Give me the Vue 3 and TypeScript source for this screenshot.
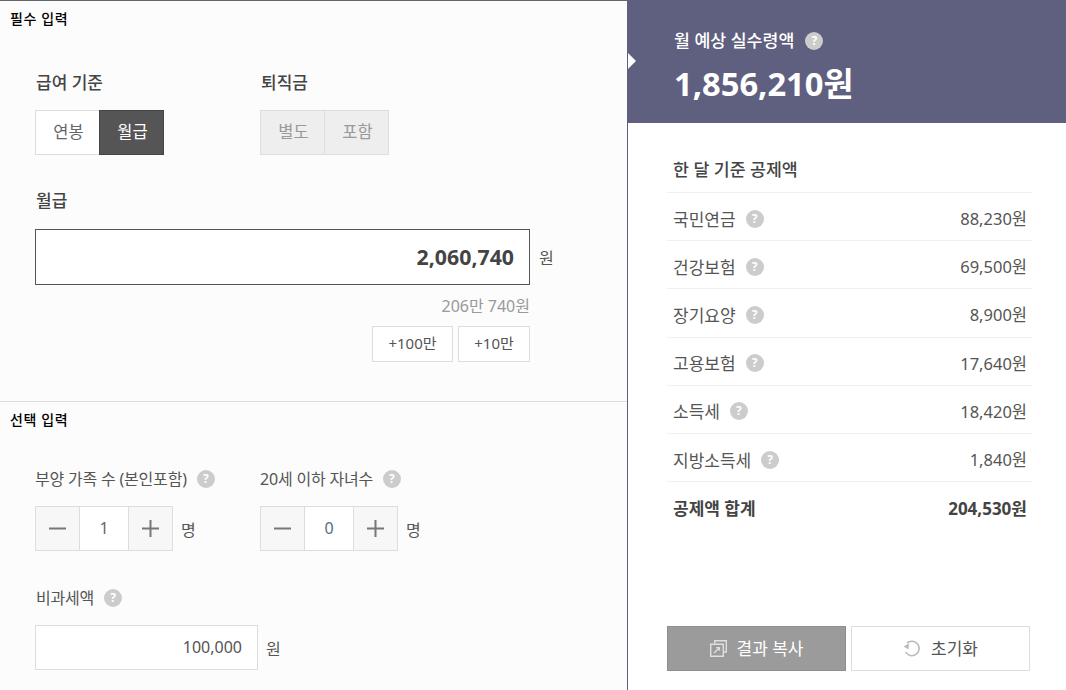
<script setup lang="ts">
interface Deduction {
  name: string
  amount: string
}

const deductions: Deduction[] = [
  { name: '국민연금', amount: '88,230원' },
  { name: '건강보험', amount: '69,500원' },
  { name: '장기요양', amount: '8,900원' },
  { name: '고용보험', amount: '17,640원' },
  { name: '소득세', amount: '18,420원' },
  { name: '지방소득세', amount: '1,840원' },
]

const steppers = [
  { label: '부양 가족 수 (본인포함)', value: 1 },
  { label: '20세 이하 자녀수', value: 0 },
]
</script>

<template>
  <div class="page">
    <div class="left">
      <section class="required">
        <h2 class="section-title">필수 입력</h2>
        <div class="choice-row">
          <div class="choice">
            <div class="label strong">급여 기준</div>
            <div class="toggle">
              <button class="toggle-btn">연봉</button>
              <button class="toggle-btn on">월급</button>
            </div>
          </div>
          <div class="choice">
            <div class="label strong">퇴직금</div>
            <div class="toggle off">
              <button class="toggle-btn">별도</button>
              <button class="toggle-btn">포함</button>
            </div>
          </div>
        </div>

        <div class="label strong salary-label">월급</div>
        <div class="salary-row">
          <div class="salary-input">2,060,740</div>
          <span class="unit">원</span>
        </div>
        <div class="salary-hint">206만 740원</div>
        <div class="quick">
          <button class="quick-btn wide">+100만</button>
          <button class="quick-btn">+10만</button>
        </div>
      </section>

      <section class="optional">
        <h2 class="section-title">선택 입력</h2>
        <div class="stepper-row">
          <div v-for="s in steppers" :key="s.label" class="choice">
            <div class="label">{{ s.label }}<span class="help">?</span></div>
            <div class="stepper-line">
              <div class="stepper">
                <button class="step-btn">
                  <svg width="17" height="17" viewBox="0 0 17 17"><path d="M0 8.5h17" stroke="#777" stroke-width="2" /></svg>
                </button>
                <div class="step-value" :class="{ zero: s.value === 0 }">{{ s.value }}</div>
                <button class="step-btn">
                  <svg width="17" height="17" viewBox="0 0 17 17"><path d="M0 8.5h17M8.5 0v17" stroke="#777" stroke-width="2" /></svg>
                </button>
              </div>
              <span class="unit">명</span>
            </div>
          </div>
        </div>
        <div class="label taxfree-label">비과세액<span class="help">?</span></div>
        <div class="taxfree-row">
          <div class="taxfree-input">100,000</div>
          <span class="unit">원</span>
        </div>
      </section>
    </div>

    <div class="right">
      <header class="result">
        <span class="arrow" />
        <div class="result-title">월 예상 실수령액<span class="help">?</span></div>
        <div class="result-amount">1,856,210원</div>
      </header>
      <div class="detail">
        <div class="detail-title">한 달 기준 공제액</div>
        <div v-for="d in deductions" :key="d.name" class="detail-row">
          <span class="row-name">{{ d.name }}<span class="help">?</span></span>
          <span class="row-amount">{{ d.amount }}</span>
        </div>
        <div class="detail-row total">
          <span class="row-name">공제액 합계</span>
          <span class="row-amount">204,530원</span>
        </div>
        <div class="actions">
          <button class="action copy">
            <svg width="17" height="17" viewBox="0 0 17 17" fill="none" stroke="#e0e0e0" stroke-width="1.4">
              <path d="M4.7 3.5V.7h11.6V12h-3" />
              <path d="M.7 4.2h12.6v12.1H.7z" />
              <path d="M4 13l5-5M6.2 7.6h3.2v3.2" />
            </svg>
            결과 복사
          </button>
          <button class="action reset">
            <svg width="18" height="17" viewBox="0 0 18 17" fill="none">
              <path d="M4 3.2a7.2 7.2 0 1 1-1.3 9" stroke="#bbb" stroke-width="1.6" />
              <path d="M0.5 6.5L6 3.5L5.5 9.5z" fill="#bbb" />
            </svg>
            초기화
          </button>
        </div>
      </div>
    </div>
  </div>
</template>

<style>
html, body {
  margin: 0;
  background: #fff;
}
</style>

<style scoped>
.page {
  display: flex;
  width: 1066px;
  height: 690px;
  overflow: hidden;
  font-family: "Noto Sans", "Noto Sans CJK KR", sans-serif;
  color: #444;
}

button {
  font-family: inherit;
  padding: 0;
  cursor: pointer;
}

.left {
  width: 627px;
  flex: none;
  background: #fcfcfc;
  border-right: 1px solid #5f6080;
  border-top: 1px solid #666;
  box-sizing: content-box;
  height: 689px;
}

.section-title {
  margin: 0;
  font-size: 14px;
  font-weight: 500;
  letter-spacing: 0.6px;
  line-height: 18px;
  color: #000;
  padding-left: 10px;
}

.required {
  height: 401px;
  box-sizing: border-box;
  padding-top: 9px;
  border-bottom: 1px solid #ddd;
}

.choice-row {
  display: flex;
  padding: 44px 0 0 35px;
  gap: 96px;
}

.choice {
  width: 129px;
}

.label {
  font-size: 16px;
  letter-spacing: -0.2px;
  line-height: 22px;
  color: #555;
  white-space: nowrap;
  display: flex;
  align-items: center;
}

.label.strong {
  font-size: 17px;
  letter-spacing: 0;
  font-weight: 500;
  color: #444;
  padding-left: 1px;
}

.toggle {
  display: flex;
  margin-top: 16px;
}

.toggle-btn {
  width: 65px;
  height: 45px;
  box-sizing: border-box;
  border: 1px solid #ddd;
  background: #fff;
  font-size: 16.5px;
  color: #666;
  padding: 0 0 4px 2px;
}

.toggle-btn + .toggle-btn {
  margin-left: -1px;
}

.toggle-btn.on {
  background: #555;
  border-color: #444;
  color: #fff;
}

.toggle.off .toggle-btn {
  background: #eee;
  color: #999;
}

.salary-label {
  margin: 35px 0 0 35px;
}

.salary-row {
  display: flex;
  align-items: center;
  margin: 17px 0 0 35px;
}

.salary-input {
  width: 495px;
  height: 56px;
  box-sizing: border-box;
  border: 1px solid #555;
  background: #fff;
  text-align: right;
  padding-right: 15px;
  font-size: 21.3px;
  font-weight: 700;
  line-height: 54px;
  color: #444;
}

.unit {
  margin-left: 8px;
  font-size: 16px;
  color: #555;
}

.salary-row .unit {
  margin-left: 9px;
}

.salary-hint {
  width: 530px;
  margin-top: 10px;
  text-align: right;
  font-size: 16px;
  line-height: 22px;
  color: #999;
}

.quick {
  display: flex;
  justify-content: flex-end;
  gap: 5px;
  width: 530px;
  margin-top: 9px;
}

.quick-btn {
  width: 72px;
  height: 36px;
  border: 1px solid #ddd;
  background: #fff;
  font-size: 15px;
  color: #555;
  padding-bottom: 3px;
}

.quick-btn.wide {
  width: 81px;
}

.optional {
  padding-top: 9px;
}

.stepper-row {
  display: flex;
  padding: 39px 0 0 35px;
  gap: 96px;
}

.stepper-line {
  display: flex;
  align-items: center;
  margin-top: 16px;
}

.stepper {
  display: flex;
  flex: none;
  width: 138px;
  height: 45px;
  box-sizing: border-box;
  border: 1px solid #ddd;
  background: #fff;
}

.step-btn {
  width: 43px;
  flex: none;
  border: 0;
  background: #f7f7f7;
  display: flex;
  align-items: center;
  justify-content: center;
}

.step-value {
  flex: 1;
  border-left: 1px solid #ddd;
  border-right: 1px solid #ddd;
  text-align: center;
  font-size: 16px;
  line-height: 42px;
  color: #666;
}

.step-value.zero {
  color: #5a6a85;
}

.taxfree-label {
  margin: 36px 0 0 36px;
}

.taxfree-row {
  display: flex;
  align-items: center;
  margin: 16px 0 0 35px;
}

.taxfree-input {
  width: 223px;
  height: 45px;
  box-sizing: border-box;
  border: 1px solid #ddd;
  background: #fff;
  text-align: right;
  padding-right: 15px;
  font-size: 16px;
  line-height: 43px;
  color: #555;
}

.help {
  display: inline-block;
  flex: none;
  width: 18px;
  height: 18px;
  margin-left: 10px;
  border-radius: 50%;
  background: #ccc;
  color: #fff;
  font-size: 12px;
  font-weight: 700;
  letter-spacing: 0;
  line-height: 18px;
  text-align: center;
}

.right {
  flex: 1;
  display: flex;
  flex-direction: column;
  background: #fff;
}

.result {
  position: relative;
  height: 123px;
  flex: none;
  box-sizing: border-box;
  padding: 29px 0 0 46px;
  background: #5f6080;
  color: #fff;
}

.arrow {
  position: absolute;
  left: 0;
  top: 53px;
  border-left: 8px solid #fcfcfc;
  border-top: 8px solid transparent;
  border-bottom: 8px solid transparent;
}

.result-title {
  display: flex;
  align-items: center;
  font-size: 17.3px;
  font-weight: 500;
  line-height: 24px;
}

.result-title .help {
  margin-left: 11px;
}

.result-amount {
  margin-top: 8px;
  font-size: 32.7px;
  font-weight: 700;
  line-height: 46px;
}

.detail {
  flex: 1;
  display: flex;
  flex-direction: column;
  padding: 0 34px 19px 39px;
}

.detail-title {
  padding: 35px 0 10px 6px;
  font-size: 17.3px;
  font-weight: 500;
  line-height: 24px;
  color: #444;
}

.detail-row {
  display: flex;
  align-items: center;
  justify-content: space-between;
  height: 48.2px;
  box-sizing: border-box;
  padding: 3px 5px 0 6px;
  border-top: 1px solid #f0f0f0;
  color: #555;
}

.row-name {
  display: flex;
  align-items: center;
  font-size: 17px;
}

.row-name .help {
  margin-top: 1px;
}

.row-amount {
  font-size: 16.5px;
}

.detail-row.total {
  font-weight: 700;
  color: #444;
}

.detail-row.total .row-amount {
  font-size: 17px;
}

.actions {
  display: flex;
  gap: 5px;
  margin-top: auto;
  width: 363px;
}

.action {
  flex: 1;
  height: 45px;
  display: flex;
  align-items: center;
  justify-content: center;
  gap: 10px;
  font-size: 17px;
  padding-bottom: 3px;
}

.action svg {
  margin-top: 3px;
}

.action.copy {
  background: #9b9b9b;
  border: 1px solid #8e8e8e;
  color: #fff;
}

.action.reset {
  background: #fff;
  border: 1px solid #ddd;
  color: #555;
}
</style>
